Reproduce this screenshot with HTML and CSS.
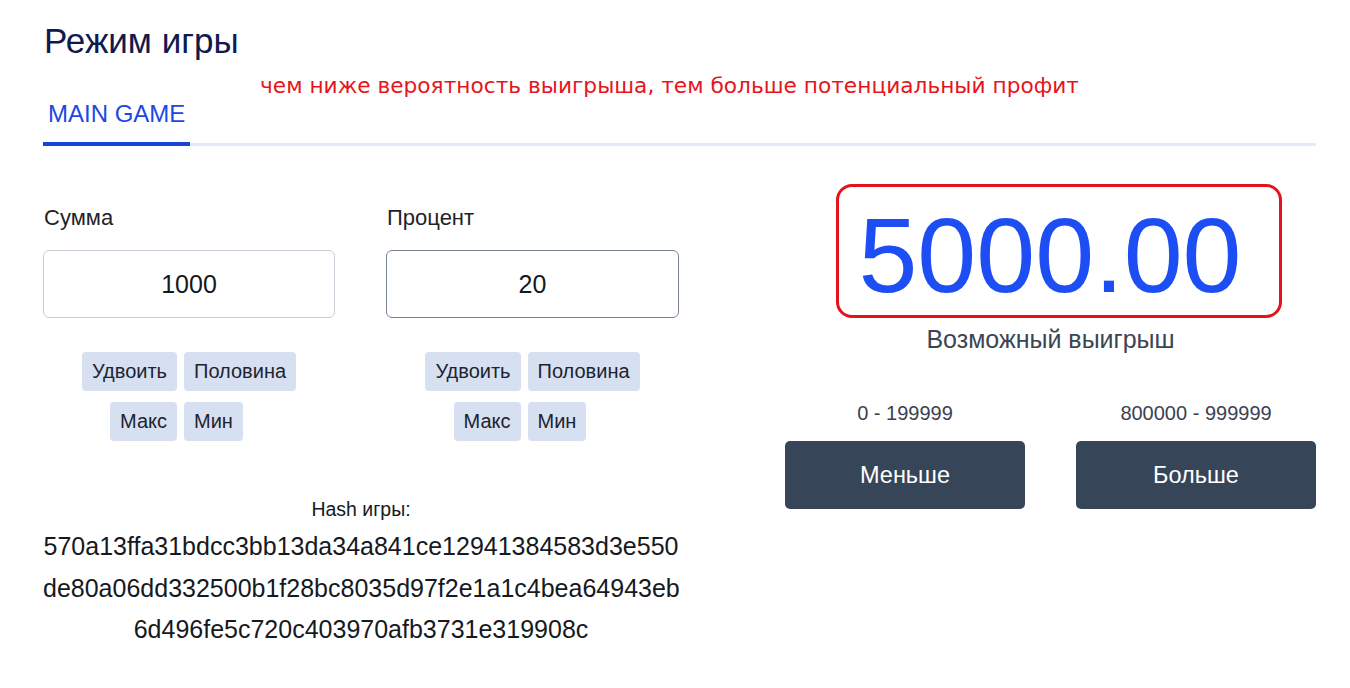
FILE: index.html
```html
<!DOCTYPE html>
<html lang="ru">
<head>
<meta charset="utf-8">
<title>Режим игры</title>
<link rel="stylesheet" href="styles.css">
</head>
<body>
<div class="page">
  <h1 class="title">Режим игры</h1>
  <div class="tabs-wrap">
    <div class="tabs">
      <div class="tab active">MAIN GAME</div>
    </div>
    <div class="note">чем ниже вероятность выигрыша, тем больше потенциальный профит</div>
  </div>
  <div class="game">
    <div class="left">
      <div class="fields">
        <div class="field">
          <label class="label">Сумма</label>
          <input class="input" type="text" value="1000">
          <div class="btn-grid">
            <button class="mini l">Удвоить</button>
            <button class="mini r">Половина</button>
            <button class="mini l">Макс</button>
            <button class="mini r">Мин</button>
          </div>
        </div>
        <div class="field">
          <label class="label">Процент</label>
          <input class="input focused" type="text" value="20">
          <div class="btn-grid">
            <button class="mini l">Удвоить</button>
            <button class="mini r">Половина</button>
            <button class="mini l">Макс</button>
            <button class="mini r">Мин</button>
          </div>
        </div>
      </div>
      <div class="hash">
        <div class="hash-label">Hash игры:</div>
        <div class="hash-line">570a13ffa31bdcc3bb13da34a841ce12941384583d3e550</div>
        <div class="hash-line">de80a06dd332500b1f28bc8035d97f2e1a1c4bea64943eb</div>
        <div class="hash-line">6d496fe5c720c403970afb3731e319908c</div>
      </div>
    </div>
    <div class="right">
      <div class="win-box">5000.00</div>
      <div class="win-label">Возможный выигрыш</div>
      <div class="bets">
        <div class="bet">
          <div class="range">0 - 199999</div>
          <button class="big">Меньше</button>
        </div>
        <div class="bet">
          <div class="range">800000 - 999999</div>
          <button class="big">Больше</button>
        </div>
      </div>
    </div>
  </div>
</div>
</body>
</html>
```
FILE: styles.css
```css
* { box-sizing: border-box; }
html, body { margin: 0; padding: 0; background: #fff; }
body {
  font-family: "Liberation Sans", Arial, sans-serif;
  color: #1b1f27;
}
.page {
  padding: 20px 34px 0 43px;
}
.title {
  margin: 0;
  font-size: 35px;
  line-height: 41px;
  font-weight: 400;
  color: #101a4c;
  padding-left: 1px;
}
.tabs-wrap {
  position: relative;
  margin-top: 38px;
}
.tabs {
  display: flex;
  border-bottom: 3px solid #e3eafa;
}
.tab {
  font-size: 24px;
  line-height: 29px;
  padding: 0 5px 14px 5px;
  color: #1c47e6;
  margin-bottom: -3px;
}
.tab.active {
  border-bottom: 4px solid #1746d6;
}
.note {
  position: absolute;
  left: 217px;
  top: -26px;
  font-family: "DejaVu Sans", sans-serif;
  font-size: 21.7px;
  line-height: 26px;
  color: #e8141c;
  white-space: nowrap;
}
.game {
  display: grid;
  grid-template-columns: 636px 1fr;
  column-gap: 106px;
  margin-top: 38px;
}
.left { padding-top: 21px; }
.fields {
  display: grid;
  grid-template-columns: 292px 293px;
  column-gap: 51px;
}
.label {
  display: block;
  font-size: 22px;
  line-height: 26px;
  color: #1f2329;
  margin-bottom: 19px;
  padding-left: 1px;
}
.input {
  display: block;
  width: 100%;
  height: 68px;
  border: 1px solid #c9cfd8;
  border-radius: 6px;
  background: #fff;
  text-align: center;
  font-family: "Liberation Sans", Arial, sans-serif;
  font-size: 25px;
  color: #15181d;
  outline: none;
  padding: 0;
}
.input.focused { border-color: #78818f; }
.btn-grid {
  display: grid;
  grid-template-columns: auto auto;
  justify-content: center;
  column-gap: 7px;
  row-gap: 11px;
  margin-top: 34px;
}
.mini {
  height: 39px;
  padding: 0 10px;
  border: none;
  border-radius: 4px;
  background: #d6e0f1;
  color: #1d2330;
  font-family: "Liberation Sans", Arial, sans-serif;
  font-size: 20px;
}
.mini.l { justify-self: end; }
.mini.r { justify-self: start; }
.hash {
  margin-top: 57px;
  text-align: center;
  color: #16191e;
}
.hash-label {
  font-size: 19.5px;
  line-height: 22px;
  margin-bottom: 6px;
}
.hash-line {
  font-size: 25px;
  line-height: 41.5px;
}
.right {
  display: flex;
  flex-direction: column;
  align-items: center;
}
.win-box {
  align-self: flex-start;
  margin-left: 51px;
  width: 446px;
  height: 134px;
  border: 3px solid #e5121b;
  border-radius: 16px;
  text-align: center;
  font-size: 106px;
  line-height: 106px;
  padding: 15px 18px 0 0;
  color: #1c4ef4;
}
.win-label {
  margin-top: 6px;
  font-size: 25px;
  line-height: 30px;
  color: #3c4553;
}
.bets {
  align-self: stretch;
  display: grid;
  grid-template-columns: 1fr 1fr;
  column-gap: 51px;
  margin-top: 47px;
}
.bet {
  display: flex;
  flex-direction: column;
  align-items: center;
}
.range {
  font-size: 20px;
  line-height: 24px;
  color: #3a4250;
  margin-bottom: 16px;
}
.big {
  width: 100%;
  height: 68px;
  border: none;
  border-radius: 5px;
  background: #374559;
  color: #fff;
  font-family: "Liberation Sans", Arial, sans-serif;
  font-size: 23.5px;
}
```
